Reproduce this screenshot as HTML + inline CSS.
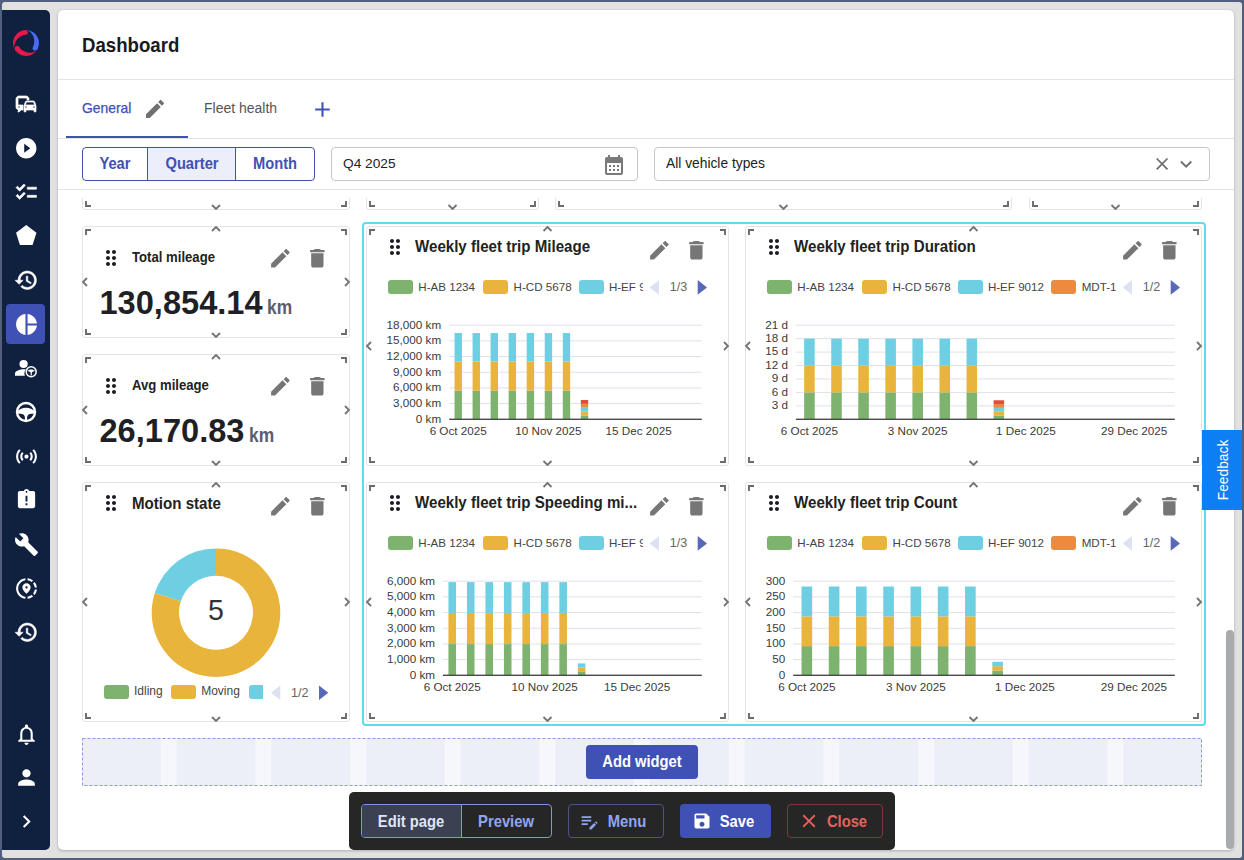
<!DOCTYPE html><html><head><meta charset="utf-8"><style>
*{box-sizing:border-box}
html,body{margin:0;padding:0}
body{width:1244px;height:860px;overflow:hidden;position:relative;background:#525f7d;font-family:"Liberation Sans",sans-serif;color:#222}
.abs{position:absolute}
svg{display:block;overflow:visible}
#frame{position:absolute;left:2px;top:2px;width:1240px;height:856px;background:#e1e1e1;border-radius:3px}
#side{position:absolute;left:2px;top:10px;width:48px;height:840px;background:#10213f;border-radius:0 5px 5px 0}
#main{position:absolute;left:58px;top:10px;width:1176px;height:840px;background:#fff;border-radius:5px;box-shadow:0 1px 3px rgba(0,0,0,.22),0 0 1px rgba(0,0,0,.15)}
.hline{position:absolute;height:1px;background:#e3e3e3}
.t{position:absolute;white-space:nowrap}
</style></head><body>
<div id="frame"></div><div id="side"></div><div id="main"></div>
<svg class="abs" style="left:13px;top:30px" width="26" height="26" viewBox="0 0 26 26"><path fill="#e8194a" d="M1.22 18.25 L0.97 17.66 L0.76 17.07 L0.58 16.47 L0.42 15.86 L0.30 15.24 L0.20 14.62 L0.14 13.99 L0.11 13.36 L0.10 12.73 L0.13 12.10 L0.19 11.47 L0.28 10.85 L0.40 10.23 L0.55 9.62 L0.73 9.01 L0.94 8.42 L1.18 7.84 L1.45 7.26 L1.74 6.71 L2.06 6.16 L2.41 5.64 L2.78 5.13 L3.18 4.64 L3.60 4.17 L4.04 3.72 L4.50 3.29 L4.99 2.89 L5.49 2.51 L6.01 2.16 L6.55 1.83 L7.10 1.53 L7.67 1.25 L8.25 1.01 L8.84 0.79 L9.44 0.60 L10.05 0.44 L10.67 0.31 L11.29 0.21 L11.92 0.15 L12.55 0.11 L12.71 4.71 L12.31 4.73 L11.90 4.77 L11.50 4.84 L11.10 4.92 L10.71 5.02 L10.33 5.14 L9.94 5.28 L9.57 5.44 L9.20 5.61 L8.84 5.79 L8.48 5.98 L8.12 6.18 L7.76 6.39 L7.40 6.61 L7.05 6.84 L6.69 7.08 L6.34 7.33 L5.99 7.60 L5.65 7.89 L5.30 8.19 L4.96 8.51 L4.63 8.85 L4.30 9.20 L3.98 9.57 L3.67 9.97 L3.37 10.38 L3.08 10.82 L2.80 11.27 L2.54 11.75 L2.29 12.25 L2.07 12.77 L1.86 13.31 L1.68 13.87 L1.53 14.45 L1.40 15.05 L1.30 15.66 L1.23 16.29 L1.19 16.93 L1.18 17.58 L1.22 18.25Z"/><circle fill="#e8194a" cx="12.63" cy="2.41" r="2.30"/><path fill="#4b6bf5" d="M14.35 0.17 L14.98 0.25 L15.62 0.37 L16.24 0.51 L16.86 0.69 L17.46 0.90 L18.06 1.13 L18.64 1.40 L19.21 1.70 L19.77 2.02 L20.31 2.37 L20.83 2.75 L21.33 3.15 L21.81 3.57 L22.26 4.02 L22.70 4.49 L23.11 4.99 L23.50 5.50 L23.86 6.03 L24.19 6.58 L24.49 7.14 L24.77 7.72 L25.02 8.31 L25.24 8.92 L25.42 9.53 L25.58 10.15 L25.71 10.78 L25.80 11.42 L25.87 12.06 L25.90 12.70 L25.90 13.34 L25.86 13.98 L25.80 14.62 L25.70 15.25 L25.57 15.88 L25.42 16.50 L25.23 17.11 L25.01 17.72 L24.76 18.31 L24.48 18.89 L24.17 19.45 L19.93 17.00 L20.12 16.65 L20.29 16.29 L20.45 15.93 L20.58 15.55 L20.70 15.17 L20.80 14.79 L20.88 14.40 L20.96 14.01 L21.02 13.61 L21.08 13.21 L21.13 12.81 L21.17 12.40 L21.19 11.99 L21.21 11.57 L21.21 11.14 L21.20 10.71 L21.18 10.27 L21.14 9.83 L21.08 9.38 L21.01 8.92 L20.92 8.46 L20.81 7.99 L20.68 7.51 L20.52 7.04 L20.35 6.56 L20.14 6.08 L19.92 5.60 L19.66 5.12 L19.38 4.64 L19.07 4.17 L18.73 3.70 L18.36 3.25 L17.96 2.80 L17.54 2.37 L17.08 1.95 L16.59 1.55 L16.07 1.17 L15.52 0.81 L14.95 0.48 L14.35 0.17Z"/><circle fill="#4b6bf5" cx="22.05" cy="18.22" r="2.45"/><path fill="#e8194a" d="M23.17 20.94 L22.77 21.42 L22.36 21.88 L21.92 22.32 L21.46 22.74 L20.99 23.13 L20.49 23.50 L19.98 23.85 L19.45 24.17 L18.91 24.47 L18.35 24.74 L17.78 24.98 L17.20 25.20 L16.61 25.38 L16.01 25.54 L15.41 25.67 L14.80 25.77 L14.18 25.85 L13.56 25.89 L12.94 25.90 L12.32 25.88 L11.71 25.84 L11.09 25.76 L10.48 25.65 L9.88 25.52 L9.28 25.35 L8.69 25.16 L8.12 24.94 L7.55 24.69 L6.99 24.42 L6.45 24.12 L5.93 23.79 L5.42 23.44 L4.93 23.06 L4.45 22.66 L4.00 22.24 L3.57 21.80 L3.15 21.33 L2.77 20.85 L2.40 20.35 L2.06 19.84 L6.30 17.19 L6.51 17.50 L6.73 17.81 L6.97 18.10 L7.22 18.39 L7.49 18.66 L7.77 18.92 L8.05 19.17 L8.34 19.41 L8.64 19.65 L8.95 19.88 L9.26 20.11 L9.58 20.33 L9.91 20.55 L10.25 20.77 L10.60 20.97 L10.96 21.17 L11.34 21.37 L11.72 21.55 L12.12 21.73 L12.53 21.90 L12.96 22.05 L13.40 22.20 L13.86 22.33 L14.33 22.44 L14.81 22.54 L15.31 22.61 L15.82 22.67 L16.34 22.71 L16.88 22.72 L17.43 22.71 L17.98 22.67 L18.55 22.61 L19.12 22.51 L19.70 22.39 L20.28 22.23 L20.86 22.04 L21.44 21.82 L22.02 21.56 L22.60 21.27 L23.17 20.94Z"/><circle fill="#e8194a" cx="4.18" cy="18.51" r="2.50"/></svg>
<svg class="abs" style="left:14.00px;top:92.00px" width="24" height="24" viewBox="0 0 24 24"><path fill="#fff" d="M12 4H5C3.34 4 2 5.34 2 7v8c0 1.66 1.34 3 3 3l-1 1v1h1l2-2.03L9 18v-5H4V5.98L13 6v2h2V7c0-1.66-1.34-3-3-3zM5 14c.55 0 1 .45 1 1s-.45 1-1 1-1-.45-1-1 .45-1 1-1zm15.57-4.34c-.14-.4-.52-.66-.97-.66h-7.19c-.46 0-.83.26-.98.66L10 13.77l.01 5.51c0 .38.31.72.69.72h.62c.38 0 .68-.38.68-.76V18h8v1.24c0 .38.31.76.69.76h.61c.38 0 .69-.34.69-.72l.01-1.37v-4.14l-1.43-4.11zm-8.16.34h7.19l1.03 3h-9.25l1.03-3zM12 16c-.55 0-1-.45-1-1s.45-1 1-1 1 .45 1 1-.45 1-1 1zm8 0c-.55 0-1-.45-1-1s.45-1 1-1 1 .45 1 1-.45 1-1 1z" stroke="#fff" stroke-width="0.7" stroke-linejoin="round"/></svg>
<svg class="abs" style="left:13.75px;top:135.75px" width="24.5" height="24.5" viewBox="0 0 24 24"><path fill="#fff" d="M12 2C6.48 2 2 6.48 2 12s4.48 10 10 10 10-4.48 10-10S17.52 2 12 2zm-2 14.5v-9l6 4.5-6 4.5z"/></svg>
<svg class="abs" style="left:13.75px;top:179.55px" width="24.5" height="24.5" viewBox="0 0 24 24"><path fill="#fff" d="M22 7h-9v2h9V7zm0 8h-9v2h9v-2zM5.54 11L2 7.46l1.41-1.41 2.12 2.12 4.24-4.24 1.41 1.41L5.54 11zm0 8L2 15.46l1.41-1.41 2.12 2.12 4.24-4.24 1.41 1.41L5.54 19z" stroke="#fff" stroke-width="0.6" stroke-linejoin="round"/></svg>
<svg class="abs" style="left:13.75px;top:222.75px" width="24.5" height="24.5" viewBox="0 0 24 24"><path fill="#fff" d="M12 2 22 9.5 18.2 21.5H5.8L2 9.5z"/></svg>
<svg class="abs" style="left:13.55px;top:267.95px" width="24.5" height="24.5" viewBox="0 0 24 24"><path fill="#fff" d="M13 3c-4.97 0-9 4.03-9 9H1l3.89 3.89.07.14L9 12H6c0-3.87 3.13-7 7-7s7 3.13 7 7-3.13 7-7 7c-1.93 0-3.68-.79-4.94-2.06l-1.42 1.42C8.27 19.99 10.51 21 13 21c4.97 0 9-4.03 9-9s-4.03-9-9-9zm-1 5v5l4.28 2.54.72-1.21-3.5-2.08V8H12z" stroke="#fff" stroke-width="0.5" stroke-linejoin="round"/></svg>
<div class="abs" style="left:6px;top:304px;width:39px;height:40px;background:#3f51b5;border-radius:4px"></div>
<svg class="abs" style="left:13.50px;top:311.50px" width="25" height="25" viewBox="0 0 24 24"><path fill="#fff" d="M11 2v20c-5.07-.5-9-4.79-9-10s3.93-9.5 9-10zm2.03 0v8.99H22c-.47-4.74-4.24-8.52-8.97-8.99zm0 11.01V22c4.74-.47 8.5-4.25 8.97-8.99h-8.97z"/></svg>
<svg class="abs" style="left:13px;top:356px" width="26" height="26" viewBox="0 0 26 26">
<circle cx="10.6" cy="8" r="4.1" fill="#fff"/>
<path fill="#fff" d="M2 19.8v-2.3c0-2.6 4.9-4.3 8.6-4.3.8 0 1.6.1 2.3.2-.9 1-1.5 2.4-1.5 3.9 0 .9.2 1.7.5 2.5z"/>
<circle cx="18.2" cy="15.7" r="5" fill="none" stroke="#fff" stroke-width="1.5"/>
<path fill="#fff" d="M14.3 15.1c.9-1.1 2.3-1.7 3.9-1.7s3 .6 3.9 1.7l-2.5.6c-.4.3-.7.7-.8 1.2v2.6h-1.2v-2.6c-.1-.5-.4-.9-.8-1.2z"/>
</svg>
<svg class="abs" style="left:14px;top:400px" width="24" height="24" viewBox="0 0 24 24">
<circle cx="12" cy="12" r="9" fill="none" stroke="#fff" stroke-width="2.4"/>
<path fill="#fff" d="M3.6 11.2c1.8-2.2 5-3.4 8.4-3.4s6.6 1.2 8.4 3.4l-.2 2.2-4.6.6c-1.4.5-2.3 1.8-2.5 3.3l-.2 3.9h-1.8l-.2-3.9c-.2-1.5-1.1-2.8-2.5-3.3l-4.6-.6z"/>
</svg>
<svg class="abs" style="left:13.50px;top:443.50px" width="25" height="25" viewBox="0 0 24 24"><path fill="#fff" d="M7.76 16.24C6.67 15.16 6 13.66 6 12s.67-3.16 1.76-4.24l1.42 1.42C8.45 9.9 8 10.9 8 12c0 1.1.45 2.1 1.17 2.83l-1.41 1.41zm8.48 0C17.33 15.16 18 13.66 18 12s-.67-3.16-1.76-4.24l-1.42 1.42C15.55 9.9 16 10.9 16 12c0 1.1-.45 2.1-1.17 2.83l1.41 1.41zM12 10c-1.1 0-2 .9-2 2s.9 2 2 2 2-.9 2-2-.9-2-2-2zm8 2c0 2.21-.9 4.21-2.35 5.65l1.42 1.42C20.88 17.26 22 14.76 22 12s-1.12-5.26-2.93-7.07l-1.42 1.42C19.1 7.79 20 9.79 20 12zM6.35 6.35L4.93 4.93C3.12 6.74 2 9.24 2 12s1.12 5.26 2.93 7.07l1.42-1.42C4.9 16.21 4 14.21 4 12s.9-4.21 2.35-5.65z"/></svg>
<svg class="abs" style="left:14.50px;top:487.50px" width="23" height="23" viewBox="0 0 24 24"><path fill="#fff" d="M19 3h-4.18C14.4 1.84 13.3 1 12 1c-1.3 0-2.4.84-2.82 2H5c-1.1 0-2 .9-2 2v14c0 1.1.9 2 2 2h14c1.1 0 2-.9 2-2V5c0-1.1-.9-2-2-2zm-6 15h-2v-2h2v2zm0-4h-2V8h2v6zm-1-9c-.55 0-1-.45-1-1s.45-1 1-1 1 .45 1 1-.45 1-1 1z"/></svg>
<svg class="abs" style="left:13.50px;top:532.00px" width="25" height="25" viewBox="0 0 24 24"><path fill="#fff" d="M22.7 19l-9.1-9.1c.9-2.3.4-5-1.5-6.9-2-2-5-2.4-7.4-1.3L9 6 6 9 1.6 4.7C.4 7.1.9 10.1 2.9 12.1c1.9 1.9 4.6 2.4 6.9 1.5l9.1 9.1c.4.4 1 .4 1.4 0l2.3-2.3c.5-.4.5-1.1.1-1.4z"/></svg>
<svg class="abs" style="left:13.50px;top:575.50px" width="25" height="25" viewBox="0 0 24 24"><path fill="#fff" d="M13.02 19.93v2.02c2.01-.2 3.84-1 5.32-2.21l-1.42-1.43c-1.11.86-2.44 1.44-3.9 1.62zM4.03 12c0-4.05 3.03-7.41 6.95-7.93V2.05C5.95 2.58 2.03 6.84 2.03 12c0 5.16 3.92 9.42 8.95 9.95v-2.02c-3.92-.52-6.95-3.88-6.95-7.93zm15.92-1h2.02c-.2-2.01-1-3.84-2.21-5.32l-1.43 1.43c.86 1.1 1.44 2.43 1.620 3.89zm-1.61-6.74c-1.48-1.21-3.32-2.01-5.32-2.21v2.02c1.46.18 2.79.76 3.9 1.62l1.42-1.43zm-.01 12.64 1.43 1.42c1.21-1.48 2.01-3.31 2.21-5.32h-2.02c-.18 1.46-.76 2.79-1.62 3.9zM16 11.1C16 8.610 14.1 7 12 7s-4 1.61-4 4.1c0 1.66 1.33 3.63 4 5.9 2.67-2.27 4-4.240 4-5.9zm-4 .9c-.59 0-1.07-.48-1.07-1.07 0-.59.48-1.070 1.07-1.07s1.07.48 1.07 1.07c0 .59-.48 1.07-1.07 1.07z"/></svg>
<svg class="abs" style="left:13.55px;top:620.45px" width="24.5" height="24.5" viewBox="0 0 24 24"><path fill="#fff" d="M13 3c-4.97 0-9 4.03-9 9H1l3.89 3.89.07.14L9 12H6c0-3.87 3.13-7 7-7s7 3.13 7 7-3.13 7-7 7c-1.93 0-3.68-.79-4.94-2.06l-1.42 1.42C8.27 19.99 10.51 21 13 21c4.97 0 9-4.03 9-9s-4.03-9-9-9zm-1 5v5l4.28 2.54.72-1.21-3.5-2.08V8H12z" stroke="#fff" stroke-width="0.5" stroke-linejoin="round"/></svg>
<svg class="abs" style="left:13.50px;top:721.50px" width="25" height="25" viewBox="0 0 24 24"><path fill="#fff" d="M12 22c1.1 0 2-.9 2-2h-4c0 1.1.89 2 2 2zm6-6v-5c0-3.07-1.64-5.64-4.5-6.32V4c0-.83-.67-1.5-1.5-1.5s-1.5.67-1.5 1.5v.68C7.63 5.36 6 7.92 6 11v5l-2 2v1h16v-1l-2-2zm-2 1H8v-6c0-2.48 1.51-4.5 4-4.5s4 2.02 4 4.5v6z"/></svg>
<svg class="abs" style="left:13.50px;top:765.00px" width="25" height="25" viewBox="0 0 24 24"><path fill="#fff" d="M12 12c2.21 0 4-1.79 4-4s-1.790-4-4-4-4 1.79-4 4 1.79 4 4 4zm0 2c-2.67 0-8 1.34-8 4v2h16v-2c0-2.66-5.33-4-8-4z"/></svg>
<svg class="abs" style="left:13.50px;top:808.50px" width="25" height="25" viewBox="0 0 24 24"><path fill="#fff" d="M10 6 8.59 7.41 13.17 12l-4.58 4.59L10 18l6-6z"/></svg>
<div class="t" style="left:82px;top:32px;font-size:20.6px;font-weight:700;color:#1a1a1a;line-height:26px;transform:scaleX(0.905);transform-origin:0 0">Dashboard</div>
<div class="hline" style="left:58px;top:79px;width:1176px"></div>
<div class="t" style="left:82px;top:98.9px;font-size:13.9px;color:#3f51b5;line-height:18px;-webkit-text-stroke:0.25px #3f51b5">General</div>
<svg class="abs" style="left:143.30px;top:96.80px" width="24" height="24" viewBox="0 0 24 24"><path fill="#707070" d="M3 17.25V21h3.75L17.81 9.94l-3.75-3.75L3 17.25zM20.71 7.04c.39-.39.39-1.02 0-1.41l-2.34-2.34c-.39-.39-1.02-.39-1.41 0l-1.83 1.83 3.75 3.75 1.83-1.83z"/></svg>
<svg class="abs" style="left:309.80px;top:96.50px" width="25" height="25" viewBox="0 0 24 24"><path fill="#3f51b5" d="M19 13h-6v6h-2v-6H5v-2h6V5h2v6h6v2z"/></svg>
<div class="abs" style="left:82px;top:147px;width:233px;height:34px;border:1px solid #3f51b5;border-radius:4px;overflow:hidden"><div class="abs" style="left:64px;top:0;width:89px;height:32px;background:#eceef9;border-left:1px solid #3f51b5;border-right:1px solid #3f51b5"></div></div>
<div class="t" style="left:54.8px;width:120px;text-align:center;top:153.5px;font-size:16.6px;line-height:20px;color:#3f51b5;font-weight:700;transform:scaleX(0.885)">Year</div>
<div class="t" style="left:131.5px;width:120px;text-align:center;top:153.5px;font-size:16.6px;line-height:20px;color:#3f51b5;font-weight:700;transform:scaleX(0.885)">Quarter</div>
<div class="t" style="left:214.8px;width:120px;text-align:center;top:153.5px;font-size:16.6px;line-height:20px;color:#3f51b5;font-weight:700;transform:scaleX(0.885)">Month</div>
<div class="abs" style="left:331px;top:147px;width:307px;height:34px;border:1px solid #c6c6c6;border-radius:4px"></div>
<div class="t" style="left:343px;top:155px;font-size:13.7px;line-height:17px;color:#222">Q4 2025</div>
<svg class="abs" style="left:601.60px;top:152.60px" width="24" height="24" viewBox="0 0 24 24"><path fill="#7a7a7a" d="M19 4h-1V2h-2v2H8V2H6v2H5c-1.11 0-1.99.9-1.99 2L3 20c0 1.1.89 2 2 2h14c1.1 0 2-.9 2-2V6c0-1.1-.9-2-2-2zm0 16H5V10h14v10zM9 14H7v-2h2v2zm4 0h-2v-2h2v2zm4 0h-2v-2h2v2zm-8 4H7v-2h2v2zm4 0h-2v-2h2v2zm4 0h-2v-2h2v2z"/></svg>
<div class="abs" style="left:654px;top:147px;width:556px;height:34px;border:1px solid #c6c6c6;border-radius:4px"></div>
<div class="t" style="left:666px;top:155px;font-size:13.8px;line-height:17px;color:#222">All vehicle types</div>
<svg class="abs" style="left:0;top:0" width="1244" height="860"><path d="M1156.7 158.5L1167.5 169.3M1167.5 158.5L1156.7 169.3" stroke="#6e6e6e" stroke-width="1.75" fill="none"/><path d="M1180.9 161.5L1186.1 166.7L1191.3 161.5" stroke="#6e6e6e" stroke-width="1.9" fill="none"/></svg>
<div class="t" style="left:204px;top:99px;font-size:14px;color:#555;line-height:18px">Fleet health</div>
<div class="abs" style="left:66px;top:136px;width:122px;height:2px;background:#3f51b5"></div>
<div class="hline" style="left:58px;top:138px;width:1176px"></div>
<div class="hline" style="left:58px;top:189px;width:1176px"></div>
<div class="abs" style="left:58px;top:198px;width:1168px;height:652px;overflow:hidden"><div class="abs" style="left:-58px;top:-198px;width:1244px;height:860px">
<div class="abs" style="left:82px;top:98px;width:268px;height:112px;border:1px solid #e3e3e6;border-radius:3px;background:#fff"></div><svg class="abs" style="left:0;top:0" width="1244" height="860"><path d="M86 107V102H91 M341 102H346V107 M86 201V206H91 M341 206H346V201" fill="none" stroke="#6b6b6b" stroke-width="1.9" stroke-linecap="butt"/><path d="M212.0 103L216.0 99L220.0 103 M212.0 205L216.0 209L220.0 205 M87 150.0L83 154.0L87 158.0 M345 150.0L349 154.0L345 158.0" fill="none" stroke="#737373" stroke-width="1.8"/></svg>
<div class="abs" style="left:366px;top:98px;width:173px;height:112px;border:1px solid #e3e3e6;border-radius:3px;background:#fff"></div><svg class="abs" style="left:0;top:0" width="1244" height="860"><path d="M370 107V102H375 M530 102H535V107 M370 201V206H375 M530 206H535V201" fill="none" stroke="#6b6b6b" stroke-width="1.9" stroke-linecap="butt"/><path d="M448.5 103L452.5 99L456.5 103 M448.5 205L452.5 209L456.5 205 M371 150.0L367 154.0L371 158.0 M534 150.0L538 154.0L534 158.0" fill="none" stroke="#737373" stroke-width="1.8"/></svg>
<div class="abs" style="left:555px;top:98px;width:457px;height:112px;border:1px solid #e3e3e6;border-radius:3px;background:#fff"></div><svg class="abs" style="left:0;top:0" width="1244" height="860"><path d="M559 107V102H564 M1003 102H1008V107 M559 201V206H564 M1003 206H1008V201" fill="none" stroke="#6b6b6b" stroke-width="1.9" stroke-linecap="butt"/><path d="M779.5 103L783.5 99L787.5 103 M779.5 205L783.5 209L787.5 205 M560 150.0L556 154.0L560 158.0 M1007 150.0L1011 154.0L1007 158.0" fill="none" stroke="#737373" stroke-width="1.8"/></svg>
<div class="abs" style="left:1029px;top:98px;width:173px;height:112px;border:1px solid #e3e3e6;border-radius:3px;background:#fff"></div><svg class="abs" style="left:0;top:0" width="1244" height="860"><path d="M1033 107V102H1038 M1193 102H1198V107 M1033 201V206H1038 M1193 206H1198V201" fill="none" stroke="#6b6b6b" stroke-width="1.9" stroke-linecap="butt"/><path d="M1111.5 103L1115.5 99L1119.5 103 M1111.5 205L1115.5 209L1119.5 205 M1034 150.0L1030 154.0L1034 158.0 M1197 150.0L1201 154.0L1197 158.0" fill="none" stroke="#737373" stroke-width="1.8"/></svg>
</div></div>
<div class="abs" style="left:362px;top:222px;width:844px;height:504px;border:2px solid #5edbec;border-radius:4px"></div>
<div class="abs" style="left:82px;top:226px;width:268px;height:112px;border:1px solid #e3e3e6;border-radius:3px;background:#fff"></div><svg class="abs" style="left:0;top:0" width="1244" height="860"><path d="M86 235V230H91 M341 230H346V235 M86 329V334H91 M341 334H346V329" fill="none" stroke="#6b6b6b" stroke-width="1.9" stroke-linecap="butt"/><path d="M212.0 231L216.0 227L220.0 231 M212.0 333L216.0 337L220.0 333 M87 278.0L83 282.0L87 286.0 M345 278.0L349 282.0L345 286.0" fill="none" stroke="#737373" stroke-width="1.8"/></svg>
<svg class="abs" style="left:99.20px;top:246.00px" width="24" height="24" viewBox="0 0 24 24"><path fill="#1c1c24" d="M11 18c0 1.1-.9 2-2 2s-2-.9-2-2 .9-2 2-2 2 .9 2 2zm-2-8c-1.1 0-2 .9-2 2s.9 2 2 2 2-.9 2-2-.9-2-2-2zm0-6c-1.1 0-2 .9-2 2s.9 2 2 2 2-.9 2-2-.9-2-2-2zm6 4c1.1 0 2-.9 2-2s-.9-2-2-2-2 .9-2 2 .9 2 2 2zm0 2c-1.1 0-2 .9-2 2s.9 2 2 2 2-.9 2-2-.9-2-2-2zm0 6c-1.1 0-2 .9-2 2s.9 2 2 2 2-.9 2-2-.9-2-2-2z"/></svg>
<div class="t" style="left:131.80px;top:248.47px;font-size:14.6px;line-height:18px;color:#222;font-weight:700;transform:scaleX(0.9);transform-origin:0 0;">Total mileage</div>
<svg class="abs" style="left:267.65px;top:245.65px" width="24.7" height="24.7" viewBox="0 0 24 24"><path fill="#767676" d="M3 17.25V21h3.75L17.81 9.94l-3.75-3.75L3 17.25zM20.71 7.04c.39-.39.39-1.02 0-1.41l-2.34-2.34c-.39-.39-1.02-.39-1.41 0l-1.83 1.83 3.75 3.75 1.83-1.83z"/></svg><svg class="abs" style="left:305.45px;top:245.65px" width="24.7" height="24.7" viewBox="0 0 24 24"><path fill="#767676" d="M6 19c0 1.1.9 2 2 2h8c1.1 0 2-.9 2-2V7H6v12zM19 4h-3.5l-1-1h-5l-1 1H5v2h14V4z"/></svg>
<div class="t" style="left:99.50px;top:282.23px;font-size:32.6px;line-height:41px;color:#1f1f26;font-weight:700;">130,854.14</div>
<div class="t" style="left:267.00px;top:294.69px;font-size:20px;line-height:25px;color:#5a5d70;font-weight:700;transform:scaleX(0.87);transform-origin:0 0">km</div>
<div class="abs" style="left:82px;top:354px;width:268px;height:112px;border:1px solid #e3e3e6;border-radius:3px;background:#fff"></div><svg class="abs" style="left:0;top:0" width="1244" height="860"><path d="M86 363V358H91 M341 358H346V363 M86 457V462H91 M341 462H346V457" fill="none" stroke="#6b6b6b" stroke-width="1.9" stroke-linecap="butt"/><path d="M212.0 359L216.0 355L220.0 359 M212.0 461L216.0 465L220.0 461 M87 406.0L83 410.0L87 414.0 M345 406.0L349 410.0L345 414.0" fill="none" stroke="#737373" stroke-width="1.8"/></svg>
<svg class="abs" style="left:99.20px;top:374.00px" width="24" height="24" viewBox="0 0 24 24"><path fill="#1c1c24" d="M11 18c0 1.1-.9 2-2 2s-2-.9-2-2 .9-2 2-2 2 .9 2 2zm-2-8c-1.1 0-2 .9-2 2s.9 2 2 2 2-.9 2-2-.9-2-2-2zm0-6c-1.1 0-2 .9-2 2s.9 2 2 2 2-.9 2-2-.9-2-2-2zm6 4c1.1 0 2-.9 2-2s-.9-2-2-2-2 .9-2 2 .9 2 2 2zm0 2c-1.1 0-2 .9-2 2s.9 2 2 2 2-.9 2-2-.9-2-2-2zm0 6c-1.1 0-2 .9-2 2s.9 2 2 2 2-.9 2-2-.9-2-2-2z"/></svg>
<div class="t" style="left:131.80px;top:376.47px;font-size:14.6px;line-height:18px;color:#222;font-weight:700;transform:scaleX(0.9);transform-origin:0 0;">Avg mileage</div>
<svg class="abs" style="left:267.65px;top:373.65px" width="24.7" height="24.7" viewBox="0 0 24 24"><path fill="#767676" d="M3 17.25V21h3.75L17.81 9.94l-3.75-3.75L3 17.25zM20.71 7.04c.39-.39.39-1.02 0-1.41l-2.34-2.34c-.39-.39-1.02-.39-1.41 0l-1.83 1.83 3.75 3.75 1.83-1.83z"/></svg><svg class="abs" style="left:305.45px;top:373.65px" width="24.7" height="24.7" viewBox="0 0 24 24"><path fill="#767676" d="M6 19c0 1.1.9 2 2 2h8c1.1 0 2-.9 2-2V7H6v12zM19 4h-3.5l-1-1h-5l-1 1H5v2h14V4z"/></svg>
<div class="t" style="left:99.50px;top:410.23px;font-size:32.6px;line-height:41px;color:#1f1f26;font-weight:700;">26,170.83</div>
<div class="t" style="left:248.50px;top:422.69px;font-size:20px;line-height:25px;color:#5a5d70;font-weight:700;transform:scaleX(0.87);transform-origin:0 0">km</div>
<div class="abs" style="left:82px;top:482px;width:268px;height:240px;border:1px solid #e3e3e6;border-radius:3px;background:#fff"></div><svg class="abs" style="left:0;top:0" width="1244" height="860"><path d="M86 491V486H91 M341 486H346V491 M86 713V718H91 M341 718H346V713" fill="none" stroke="#6b6b6b" stroke-width="1.9" stroke-linecap="butt"/><path d="M212.0 487L216.0 483L220.0 487 M212.0 717L216.0 721L220.0 717 M87 598.0L83 602.0L87 606.0 M345 598.0L349 602.0L345 606.0" fill="none" stroke="#737373" stroke-width="1.8"/></svg>
<svg class="abs" style="left:99.20px;top:491.00px" width="24" height="24" viewBox="0 0 24 24"><path fill="#1c1c24" d="M11 18c0 1.1-.9 2-2 2s-2-.9-2-2 .9-2 2-2 2 .9 2 2zm-2-8c-1.1 0-2 .9-2 2s.9 2 2 2 2-.9 2-2-.9-2-2-2zm0-6c-1.1 0-2 .9-2 2s.9 2 2 2 2-.9 2-2-.9-2-2-2zm6 4c1.1 0 2-.9 2-2s-.9-2-2-2-2 .9-2 2 .9 2 2 2zm0 2c-1.1 0-2 .9-2 2s.9 2 2 2 2-.9 2-2-.9-2-2-2zm0 6c-1.1 0-2 .9-2 2s.9 2 2 2 2-.9 2-2-.9-2-2-2z"/></svg>
<div class="t" style="left:132.00px;top:493.21px;font-size:16.6px;line-height:21px;color:#222;font-weight:700;transform:scaleX(0.91);transform-origin:0 0;">Motion state</div>
<svg class="abs" style="left:267.65px;top:493.65px" width="24.7" height="24.7" viewBox="0 0 24 24"><path fill="#767676" d="M3 17.25V21h3.75L17.81 9.94l-3.75-3.75L3 17.25zM20.71 7.04c.39-.39.39-1.02 0-1.41l-2.34-2.34c-.39-.39-1.02-.39-1.41 0l-1.83 1.83 3.75 3.75 1.83-1.83z"/></svg><svg class="abs" style="left:305.45px;top:493.65px" width="24.7" height="24.7" viewBox="0 0 24 24"><path fill="#767676" d="M6 19c0 1.1.9 2 2 2h8c1.1 0 2-.9 2-2V7H6v12zM19 4h-3.5l-1-1h-5l-1 1H5v2h14V4z"/></svg>
<svg class="abs" style="left:0;top:0" width="1244" height="860"><path fill="#e9b43b" d="M216.00 548.40A64.3 64.3 0 1 1 154.85 592.83L180.81 601.27A37 37 0 1 0 216.00 575.70Z"/><path fill="#6dcfe1" d="M154.85 592.83A64.3 64.3 0 0 1 216.00 548.40L216.00 575.70A37 37 0 0 0 180.81 601.27Z"/></svg>
<div class="t" style="left:16.30px;width:400px;text-align:center;top:591.09px;font-size:30px;line-height:38px;color:#333;font-weight:400;transform:scaleX(0.95);transform-origin:50% 0;">5</div>
<div class="abs" style="left:104px;top:685.3px;width:25px;height:14px;background:#7db26f;border-radius:3px"></div>
<div class="t" style="left:134.00px;top:684.33px;font-size:12px;line-height:15px;color:#444;font-weight:400;">Idling</div>
<div class="abs" style="left:171.3px;top:685.3px;width:25px;height:14px;background:#e9b43b;border-radius:3px"></div>
<div class="t" style="left:201.20px;top:684.33px;font-size:12px;line-height:15px;color:#444;font-weight:400;">Moving</div>
<div class="abs" style="left:249px;top:685px;width:14px;height:14px;overflow:hidden"><div class="abs" style="left:0;top:0;width:25px;height:14px;background:#6dcfe1;border-radius:3px"></div></div>
<svg class="abs" style="left:0;top:0" width="1244" height="860"><path fill="#dde1f2" d="M280.3 685.4L271 692.6999999999999L280.3 699.9999999999999Z"/><path fill="#5869b9" d="M319 685.4L328.3 692.6999999999999L319 699.9999999999999Z"/></svg><div class="t" style="left:291.00px;top:684.74px;font-size:12.6px;line-height:16px;color:#666;font-weight:400;">1/2</div>
<div class="abs" style="left:366px;top:226px;width:363px;height:240px;border:1px solid #e3e3e6;border-radius:3px;background:#fff"></div><svg class="abs" style="left:0;top:0" width="1244" height="860"><path d="M370 235V230H375 M720 230H725V235 M370 457V462H375 M720 462H725V457" fill="none" stroke="#6b6b6b" stroke-width="1.9" stroke-linecap="butt"/><path d="M543.5 231L547.5 227L551.5 231 M543.5 461L547.5 465L551.5 461 M371 342.0L367 346.0L371 350.0 M724 342.0L728 346.0L724 350.0" fill="none" stroke="#737373" stroke-width="1.8"/></svg><svg class="abs" style="left:383.00px;top:235.00px" width="24" height="24" viewBox="0 0 24 24"><path fill="#1c1c24" d="M11 18c0 1.1-.9 2-2 2s-2-.9-2-2 .9-2 2-2 2 .9 2 2zm-2-8c-1.1 0-2 .9-2 2s.9 2 2 2 2-.9 2-2-.9-2-2-2zm0-6c-1.1 0-2 .9-2 2s.9 2 2 2 2-.9 2-2-.9-2-2-2zm6 4c1.1 0 2-.9 2-2s-.9-2-2-2-2 .9-2 2 .9 2 2 2zm0 2c-1.1 0-2 .9-2 2s.9 2 2 2 2-.9 2-2-.9-2-2-2zm0 6c-1.1 0-2 .9-2 2s.9 2 2 2 2-.9 2-2-.9-2-2-2z"/></svg><div class="t" style="left:415.20px;top:235.81px;font-size:16.6px;line-height:21px;color:#222;font-weight:700;transform:scaleX(0.91);transform-origin:0 0;">Weekly fleet trip Mileage</div><svg class="abs" style="left:646.65px;top:238.15px" width="24.7" height="24.7" viewBox="0 0 24 24"><path fill="#767676" d="M3 17.25V21h3.75L17.81 9.94l-3.75-3.75L3 17.25zM20.71 7.04c.39-.39.39-1.02 0-1.41l-2.34-2.34c-.39-.39-1.02-.39-1.41 0l-1.83 1.83 3.75 3.75 1.83-1.83z"/></svg><svg class="abs" style="left:684.45px;top:238.15px" width="24.7" height="24.7" viewBox="0 0 24 24"><path fill="#767676" d="M6 19c0 1.1.9 2 2 2h8c1.1 0 2-.9 2-2V7H6v12zM19 4h-3.5l-1-1h-5l-1 1H5v2h14V4z"/></svg><div class="abs" style="left:0;top:0;width:643.0px;height:860px;overflow:hidden"><div class="abs" style="left:388px;top:280px;width:25px;height:14px;background:#7db26f;border-radius:3px"></div><div class="t" style="left:418.30px;top:280.37px;font-size:11.6px;line-height:14px;color:#444;font-weight:400;">H-AB 1234</div><div class="abs" style="left:483.3px;top:280px;width:25px;height:14px;background:#e9b43b;border-radius:3px"></div><div class="t" style="left:513.60px;top:280.37px;font-size:11.6px;line-height:14px;color:#444;font-weight:400;">H-CD 5678</div><div class="abs" style="left:578.6px;top:280px;width:25px;height:14px;background:#6dcfe1;border-radius:3px"></div><div class="t" style="left:608.90px;top:280.37px;font-size:11.6px;line-height:14px;color:#444;font-weight:400;">H-EF 9012</div></div><svg class="abs" style="left:0;top:0" width="1244" height="860"><path fill="#dde1f2" d="M659.0 280.09999999999997L649.7 287.4L659.0 294.7Z"/><path fill="#5869b9" d="M697.7 280.09999999999997L707.0 287.4L697.7 294.7Z"/></svg><div class="t" style="left:669.70px;top:279.44px;font-size:12.6px;line-height:16px;color:#666;font-weight:400;">1/3</div><svg class="abs" style="left:0;top:0" width="1244" height="860"><text x="441.2" y="422.70" text-anchor="end" font-size="11.7" fill="#3a3a3a">0 km</text><rect x="449.2" y="403.12" width="252.60" height="1" fill="#dfe1ea"/><text x="441.2" y="407.02" text-anchor="end" font-size="11.7" fill="#3a3a3a">3,000 km</text><rect x="449.2" y="387.43" width="252.60" height="1" fill="#dfe1ea"/><text x="441.2" y="391.33" text-anchor="end" font-size="11.7" fill="#3a3a3a">6,000 km</text><rect x="449.2" y="371.75" width="252.60" height="1" fill="#dfe1ea"/><text x="441.2" y="375.65" text-anchor="end" font-size="11.7" fill="#3a3a3a">9,000 km</text><rect x="449.2" y="356.07" width="252.60" height="1" fill="#dfe1ea"/><text x="441.2" y="359.97" text-anchor="end" font-size="11.7" fill="#3a3a3a">12,000 km</text><rect x="449.2" y="340.38" width="252.60" height="1" fill="#dfe1ea"/><text x="441.2" y="344.28" text-anchor="end" font-size="11.7" fill="#3a3a3a">15,000 km</text><rect x="449.2" y="324.70" width="252.60" height="1" fill="#dfe1ea"/><text x="441.2" y="328.60" text-anchor="end" font-size="11.7" fill="#3a3a3a">18,000 km</text><rect x="454.52" y="390.55" width="7.40" height="28.75" fill="#7db26f"/><rect x="454.52" y="361.48" width="7.40" height="29.07" fill="#e9b43b"/><rect x="454.52" y="333.04" width="7.40" height="28.44" fill="#6dcfe1"/><rect x="472.57" y="390.55" width="7.40" height="28.75" fill="#7db26f"/><rect x="472.57" y="361.48" width="7.40" height="29.07" fill="#e9b43b"/><rect x="472.57" y="333.04" width="7.40" height="28.44" fill="#6dcfe1"/><rect x="490.61" y="390.55" width="7.40" height="28.75" fill="#7db26f"/><rect x="490.61" y="361.48" width="7.40" height="29.07" fill="#e9b43b"/><rect x="490.61" y="333.04" width="7.40" height="28.44" fill="#6dcfe1"/><rect x="508.65" y="390.55" width="7.40" height="28.75" fill="#7db26f"/><rect x="508.65" y="361.48" width="7.40" height="29.07" fill="#e9b43b"/><rect x="508.65" y="333.04" width="7.40" height="28.44" fill="#6dcfe1"/><rect x="526.69" y="390.55" width="7.40" height="28.75" fill="#7db26f"/><rect x="526.69" y="361.48" width="7.40" height="29.07" fill="#e9b43b"/><rect x="526.69" y="333.04" width="7.40" height="28.44" fill="#6dcfe1"/><rect x="544.74" y="390.55" width="7.40" height="28.75" fill="#7db26f"/><rect x="544.74" y="361.48" width="7.40" height="29.07" fill="#e9b43b"/><rect x="544.74" y="333.04" width="7.40" height="28.44" fill="#6dcfe1"/><rect x="562.78" y="390.55" width="7.40" height="28.75" fill="#7db26f"/><rect x="562.78" y="361.48" width="7.40" height="29.07" fill="#e9b43b"/><rect x="562.78" y="333.04" width="7.40" height="28.44" fill="#6dcfe1"/><rect x="580.82" y="415.43" width="7.40" height="3.87" fill="#7db26f"/><rect x="580.82" y="411.56" width="7.40" height="3.87" fill="#e9b43b"/><rect x="580.82" y="407.69" width="7.40" height="3.87" fill="#6dcfe1"/><rect x="580.82" y="403.83" width="7.40" height="3.87" fill="#ef8a3d"/><rect x="580.82" y="399.96" width="7.40" height="3.87" fill="#e34b3f"/><rect x="449.2" y="418.60" width="252.60" height="1.4" fill="#4a4a4a"/><text x="458.22" y="435.40" text-anchor="middle" font-size="11.7" fill="#3a3a3a">6 Oct 2025</text><text x="548.44" y="435.40" text-anchor="middle" font-size="11.7" fill="#3a3a3a">10 Nov 2025</text><text x="638.65" y="435.40" text-anchor="middle" font-size="11.7" fill="#3a3a3a">15 Dec 2025</text></svg>
<div class="abs" style="left:745px;top:226px;width:457px;height:240px;border:1px solid #e3e3e6;border-radius:3px;background:#fff"></div><svg class="abs" style="left:0;top:0" width="1244" height="860"><path d="M749 235V230H754 M1193 230H1198V235 M749 457V462H754 M1193 462H1198V457" fill="none" stroke="#6b6b6b" stroke-width="1.9" stroke-linecap="butt"/><path d="M969.5 231L973.5 227L977.5 231 M969.5 461L973.5 465L977.5 461 M750 342.0L746 346.0L750 350.0 M1197 342.0L1201 346.0L1197 350.0" fill="none" stroke="#737373" stroke-width="1.8"/></svg><svg class="abs" style="left:762.00px;top:235.00px" width="24" height="24" viewBox="0 0 24 24"><path fill="#1c1c24" d="M11 18c0 1.1-.9 2-2 2s-2-.9-2-2 .9-2 2-2 2 .9 2 2zm-2-8c-1.1 0-2 .9-2 2s.9 2 2 2 2-.9 2-2-.9-2-2-2zm0-6c-1.1 0-2 .9-2 2s.9 2 2 2 2-.9 2-2-.9-2-2-2zm6 4c1.1 0 2-.9 2-2s-.9-2-2-2-2 .9-2 2 .9 2 2 2zm0 2c-1.1 0-2 .9-2 2s.9 2 2 2 2-.9 2-2-.9-2-2-2zm0 6c-1.1 0-2 .9-2 2s.9 2 2 2 2-.9 2-2-.9-2-2-2z"/></svg><div class="t" style="left:794.20px;top:235.81px;font-size:16.6px;line-height:21px;color:#222;font-weight:700;transform:scaleX(0.91);transform-origin:0 0;">Weekly fleet trip Duration</div><svg class="abs" style="left:1119.65px;top:238.15px" width="24.7" height="24.7" viewBox="0 0 24 24"><path fill="#767676" d="M3 17.25V21h3.75L17.81 9.94l-3.75-3.75L3 17.25zM20.71 7.04c.39-.39.39-1.02 0-1.41l-2.34-2.34c-.39-.39-1.02-.39-1.41 0l-1.83 1.83 3.75 3.75 1.83-1.83z"/></svg><svg class="abs" style="left:1157.45px;top:238.15px" width="24.7" height="24.7" viewBox="0 0 24 24"><path fill="#767676" d="M6 19c0 1.1.9 2 2 2h8c1.1 0 2-.9 2-2V7H6v12zM19 4h-3.5l-1-1h-5l-1 1H5v2h14V4z"/></svg><div class="abs" style="left:0;top:0;width:1116.0px;height:860px;overflow:hidden"><div class="abs" style="left:767px;top:280px;width:25px;height:14px;background:#7db26f;border-radius:3px"></div><div class="t" style="left:797.30px;top:280.37px;font-size:11.6px;line-height:14px;color:#444;font-weight:400;">H-AB 1234</div><div class="abs" style="left:862.3px;top:280px;width:25px;height:14px;background:#e9b43b;border-radius:3px"></div><div class="t" style="left:892.60px;top:280.37px;font-size:11.6px;line-height:14px;color:#444;font-weight:400;">H-CD 5678</div><div class="abs" style="left:957.6px;top:280px;width:25px;height:14px;background:#6dcfe1;border-radius:3px"></div><div class="t" style="left:987.90px;top:280.37px;font-size:11.6px;line-height:14px;color:#444;font-weight:400;">H-EF 9012</div><div class="abs" style="left:1051.4px;top:280px;width:25px;height:14px;background:#ef8a3d;border-radius:3px"></div><div class="t" style="left:1081.70px;top:280.37px;font-size:11.6px;line-height:14px;color:#444;font-weight:400;">MDT-1234</div></div><svg class="abs" style="left:0;top:0" width="1244" height="860"><path fill="#dde1f2" d="M1132.0 280.09999999999997L1122.7 287.4L1132.0 294.7Z"/><path fill="#5869b9" d="M1170.7 280.09999999999997L1180.0 287.4L1170.7 294.7Z"/></svg><div class="t" style="left:1142.70px;top:279.44px;font-size:12.6px;line-height:16px;color:#666;font-weight:400;">1/2</div><svg class="abs" style="left:0;top:0" width="1244" height="860"><rect x="795.9" y="405.36" width="378.90" height="1" fill="#dfe1ea"/><text x="787.9" y="409.26" text-anchor="end" font-size="11.7" fill="#3a3a3a">3 d</text><rect x="795.9" y="391.91" width="378.90" height="1" fill="#dfe1ea"/><text x="787.9" y="395.81" text-anchor="end" font-size="11.7" fill="#3a3a3a">6 d</text><rect x="795.9" y="378.47" width="378.90" height="1" fill="#dfe1ea"/><text x="787.9" y="382.37" text-anchor="end" font-size="11.7" fill="#3a3a3a">9 d</text><rect x="795.9" y="365.03" width="378.90" height="1" fill="#dfe1ea"/><text x="787.9" y="368.93" text-anchor="end" font-size="11.7" fill="#3a3a3a">12 d</text><rect x="795.9" y="351.59" width="378.90" height="1" fill="#dfe1ea"/><text x="787.9" y="355.49" text-anchor="end" font-size="11.7" fill="#3a3a3a">15 d</text><rect x="795.9" y="338.14" width="378.90" height="1" fill="#dfe1ea"/><text x="787.9" y="342.04" text-anchor="end" font-size="11.7" fill="#3a3a3a">18 d</text><rect x="795.9" y="324.70" width="378.90" height="1" fill="#dfe1ea"/><text x="787.9" y="328.60" text-anchor="end" font-size="11.7" fill="#3a3a3a">21 d</text><rect x="804.15" y="392.41" width="10.56" height="26.89" fill="#7db26f"/><rect x="804.15" y="365.53" width="10.56" height="26.89" fill="#e9b43b"/><rect x="804.15" y="338.64" width="10.56" height="26.89" fill="#6dcfe1"/><rect x="831.22" y="392.41" width="10.56" height="26.89" fill="#7db26f"/><rect x="831.22" y="365.53" width="10.56" height="26.89" fill="#e9b43b"/><rect x="831.22" y="338.64" width="10.56" height="26.89" fill="#6dcfe1"/><rect x="858.28" y="392.41" width="10.56" height="26.89" fill="#7db26f"/><rect x="858.28" y="365.53" width="10.56" height="26.89" fill="#e9b43b"/><rect x="858.28" y="338.64" width="10.56" height="26.89" fill="#6dcfe1"/><rect x="885.35" y="392.41" width="10.56" height="26.89" fill="#7db26f"/><rect x="885.35" y="365.53" width="10.56" height="26.89" fill="#e9b43b"/><rect x="885.35" y="338.64" width="10.56" height="26.89" fill="#6dcfe1"/><rect x="912.41" y="392.41" width="10.56" height="26.89" fill="#7db26f"/><rect x="912.41" y="365.53" width="10.56" height="26.89" fill="#e9b43b"/><rect x="912.41" y="338.64" width="10.56" height="26.89" fill="#6dcfe1"/><rect x="939.48" y="392.41" width="10.56" height="26.89" fill="#7db26f"/><rect x="939.48" y="365.53" width="10.56" height="26.89" fill="#e9b43b"/><rect x="939.48" y="338.64" width="10.56" height="26.89" fill="#6dcfe1"/><rect x="966.54" y="392.41" width="10.56" height="26.89" fill="#7db26f"/><rect x="966.54" y="365.53" width="10.56" height="26.89" fill="#e9b43b"/><rect x="966.54" y="338.64" width="10.56" height="26.89" fill="#6dcfe1"/><rect x="993.60" y="415.49" width="10.56" height="3.81" fill="#7db26f"/><rect x="993.60" y="411.68" width="10.56" height="3.81" fill="#e9b43b"/><rect x="993.60" y="407.87" width="10.56" height="3.81" fill="#6dcfe1"/><rect x="993.60" y="404.06" width="10.56" height="3.81" fill="#ef8a3d"/><rect x="993.60" y="400.26" width="10.56" height="3.81" fill="#e34b3f"/><rect x="795.9" y="418.60" width="378.90" height="1.4" fill="#4a4a4a"/><text x="809.43" y="435.40" text-anchor="middle" font-size="11.7" fill="#3a3a3a">6 Oct 2025</text><text x="917.69" y="435.40" text-anchor="middle" font-size="11.7" fill="#3a3a3a">3 Nov 2025</text><text x="1025.95" y="435.40" text-anchor="middle" font-size="11.7" fill="#3a3a3a">1 Dec 2025</text><text x="1134.20" y="435.40" text-anchor="middle" font-size="11.7" fill="#3a3a3a">29 Dec 2025</text></svg>
<div class="abs" style="left:366px;top:482px;width:363px;height:240px;border:1px solid #e3e3e6;border-radius:3px;background:#fff"></div><svg class="abs" style="left:0;top:0" width="1244" height="860"><path d="M370 491V486H375 M720 486H725V491 M370 713V718H375 M720 718H725V713" fill="none" stroke="#6b6b6b" stroke-width="1.9" stroke-linecap="butt"/><path d="M543.5 487L547.5 483L551.5 487 M543.5 717L547.5 721L551.5 717 M371 598.0L367 602.0L371 606.0 M724 598.0L728 602.0L724 606.0" fill="none" stroke="#737373" stroke-width="1.8"/></svg><svg class="abs" style="left:383.00px;top:491.00px" width="24" height="24" viewBox="0 0 24 24"><path fill="#1c1c24" d="M11 18c0 1.1-.9 2-2 2s-2-.9-2-2 .9-2 2-2 2 .9 2 2zm-2-8c-1.1 0-2 .9-2 2s.9 2 2 2 2-.9 2-2-.9-2-2-2zm0-6c-1.1 0-2 .9-2 2s.9 2 2 2 2-.9 2-2-.9-2-2-2zm6 4c1.1 0 2-.9 2-2s-.9-2-2-2-2 .9-2 2 .9 2 2 2zm0 2c-1.1 0-2 .9-2 2s.9 2 2 2 2-.9 2-2-.9-2-2-2zm0 6c-1.1 0-2 .9-2 2s.9 2 2 2 2-.9 2-2-.9-2-2-2z"/></svg><div class="t" style="left:415.20px;top:491.81px;font-size:16.6px;line-height:21px;color:#222;font-weight:700;transform:scaleX(0.91);transform-origin:0 0;">Weekly fleet trip Speeding mi...</div><svg class="abs" style="left:646.65px;top:494.15px" width="24.7" height="24.7" viewBox="0 0 24 24"><path fill="#767676" d="M3 17.25V21h3.75L17.81 9.94l-3.75-3.75L3 17.25zM20.71 7.04c.39-.39.39-1.02 0-1.41l-2.34-2.34c-.39-.39-1.02-.39-1.41 0l-1.83 1.83 3.75 3.75 1.83-1.83z"/></svg><svg class="abs" style="left:684.45px;top:494.15px" width="24.7" height="24.7" viewBox="0 0 24 24"><path fill="#767676" d="M6 19c0 1.1.9 2 2 2h8c1.1 0 2-.9 2-2V7H6v12zM19 4h-3.5l-1-1h-5l-1 1H5v2h14V4z"/></svg><div class="abs" style="left:0;top:0;width:643.0px;height:860px;overflow:hidden"><div class="abs" style="left:388px;top:536px;width:25px;height:14px;background:#7db26f;border-radius:3px"></div><div class="t" style="left:418.30px;top:536.37px;font-size:11.6px;line-height:14px;color:#444;font-weight:400;">H-AB 1234</div><div class="abs" style="left:483.3px;top:536px;width:25px;height:14px;background:#e9b43b;border-radius:3px"></div><div class="t" style="left:513.60px;top:536.37px;font-size:11.6px;line-height:14px;color:#444;font-weight:400;">H-CD 5678</div><div class="abs" style="left:578.6px;top:536px;width:25px;height:14px;background:#6dcfe1;border-radius:3px"></div><div class="t" style="left:608.90px;top:536.37px;font-size:11.6px;line-height:14px;color:#444;font-weight:400;">H-EF 9012</div></div><svg class="abs" style="left:0;top:0" width="1244" height="860"><path fill="#dde1f2" d="M659.0 536.1L649.7 543.4L659.0 550.6999999999999Z"/><path fill="#5869b9" d="M697.7 536.1L707.0 543.4L697.7 550.6999999999999Z"/></svg><div class="t" style="left:669.70px;top:535.44px;font-size:12.6px;line-height:16px;color:#666;font-weight:400;">1/3</div><svg class="abs" style="left:0;top:0" width="1244" height="860"><text x="435" y="678.70" text-anchor="end" font-size="11.7" fill="#3a3a3a">0 km</text><rect x="443" y="659.12" width="258.80" height="1" fill="#dfe1ea"/><text x="435" y="663.02" text-anchor="end" font-size="11.7" fill="#3a3a3a">1,000 km</text><rect x="443" y="643.43" width="258.80" height="1" fill="#dfe1ea"/><text x="435" y="647.33" text-anchor="end" font-size="11.7" fill="#3a3a3a">2,000 km</text><rect x="443" y="627.75" width="258.80" height="1" fill="#dfe1ea"/><text x="435" y="631.65" text-anchor="end" font-size="11.7" fill="#3a3a3a">3,000 km</text><rect x="443" y="612.07" width="258.80" height="1" fill="#dfe1ea"/><text x="435" y="615.97" text-anchor="end" font-size="11.7" fill="#3a3a3a">4,000 km</text><rect x="443" y="596.38" width="258.80" height="1" fill="#dfe1ea"/><text x="435" y="600.28" text-anchor="end" font-size="11.7" fill="#3a3a3a">5,000 km</text><rect x="443" y="580.70" width="258.80" height="1" fill="#dfe1ea"/><text x="435" y="584.60" text-anchor="end" font-size="11.7" fill="#3a3a3a">6,000 km</text><rect x="448.45" y="644.09" width="7.58" height="31.21" fill="#7db26f"/><rect x="448.45" y="612.88" width="7.58" height="31.21" fill="#e9b43b"/><rect x="448.45" y="582.14" width="7.58" height="30.74" fill="#6dcfe1"/><rect x="466.94" y="644.09" width="7.58" height="31.21" fill="#7db26f"/><rect x="466.94" y="612.88" width="7.58" height="31.21" fill="#e9b43b"/><rect x="466.94" y="582.14" width="7.58" height="30.74" fill="#6dcfe1"/><rect x="485.42" y="644.09" width="7.58" height="31.21" fill="#7db26f"/><rect x="485.42" y="612.88" width="7.58" height="31.21" fill="#e9b43b"/><rect x="485.42" y="582.14" width="7.58" height="30.74" fill="#6dcfe1"/><rect x="503.91" y="644.09" width="7.58" height="31.21" fill="#7db26f"/><rect x="503.91" y="612.88" width="7.58" height="31.21" fill="#e9b43b"/><rect x="503.91" y="582.14" width="7.58" height="30.74" fill="#6dcfe1"/><rect x="522.40" y="644.09" width="7.58" height="31.21" fill="#7db26f"/><rect x="522.40" y="612.88" width="7.58" height="31.21" fill="#e9b43b"/><rect x="522.40" y="582.14" width="7.58" height="30.74" fill="#6dcfe1"/><rect x="540.88" y="644.09" width="7.58" height="31.21" fill="#7db26f"/><rect x="540.88" y="612.88" width="7.58" height="31.21" fill="#e9b43b"/><rect x="540.88" y="582.14" width="7.58" height="30.74" fill="#6dcfe1"/><rect x="559.37" y="644.09" width="7.58" height="31.21" fill="#7db26f"/><rect x="559.37" y="612.88" width="7.58" height="31.21" fill="#e9b43b"/><rect x="559.37" y="582.14" width="7.58" height="30.74" fill="#6dcfe1"/><rect x="577.85" y="671.38" width="7.58" height="3.92" fill="#7db26f"/><rect x="577.85" y="667.46" width="7.58" height="3.92" fill="#e9b43b"/><rect x="577.85" y="663.38" width="7.58" height="4.08" fill="#6dcfe1"/><rect x="443" y="674.60" width="258.80" height="1.4" fill="#4a4a4a"/><text x="452.24" y="691.40" text-anchor="middle" font-size="11.7" fill="#3a3a3a">6 Oct 2025</text><text x="544.67" y="691.40" text-anchor="middle" font-size="11.7" fill="#3a3a3a">10 Nov 2025</text><text x="637.10" y="691.40" text-anchor="middle" font-size="11.7" fill="#3a3a3a">15 Dec 2025</text></svg>
<div class="abs" style="left:745px;top:482px;width:457px;height:240px;border:1px solid #e3e3e6;border-radius:3px;background:#fff"></div><svg class="abs" style="left:0;top:0" width="1244" height="860"><path d="M749 491V486H754 M1193 486H1198V491 M749 713V718H754 M1193 718H1198V713" fill="none" stroke="#6b6b6b" stroke-width="1.9" stroke-linecap="butt"/><path d="M969.5 487L973.5 483L977.5 487 M969.5 717L973.5 721L977.5 717 M750 598.0L746 602.0L750 606.0 M1197 598.0L1201 602.0L1197 606.0" fill="none" stroke="#737373" stroke-width="1.8"/></svg><svg class="abs" style="left:762.00px;top:491.00px" width="24" height="24" viewBox="0 0 24 24"><path fill="#1c1c24" d="M11 18c0 1.1-.9 2-2 2s-2-.9-2-2 .9-2 2-2 2 .9 2 2zm-2-8c-1.1 0-2 .9-2 2s.9 2 2 2 2-.9 2-2-.9-2-2-2zm0-6c-1.1 0-2 .9-2 2s.9 2 2 2 2-.9 2-2-.9-2-2-2zm6 4c1.1 0 2-.9 2-2s-.9-2-2-2-2 .9-2 2 .9 2 2 2zm0 2c-1.1 0-2 .9-2 2s.9 2 2 2 2-.9 2-2-.9-2-2-2zm0 6c-1.1 0-2 .9-2 2s.9 2 2 2 2-.9 2-2-.9-2-2-2z"/></svg><div class="t" style="left:794.20px;top:491.81px;font-size:16.6px;line-height:21px;color:#222;font-weight:700;transform:scaleX(0.91);transform-origin:0 0;">Weekly fleet trip Count</div><svg class="abs" style="left:1119.65px;top:494.15px" width="24.7" height="24.7" viewBox="0 0 24 24"><path fill="#767676" d="M3 17.25V21h3.75L17.81 9.94l-3.75-3.75L3 17.25zM20.71 7.04c.39-.39.39-1.02 0-1.41l-2.34-2.34c-.39-.39-1.02-.39-1.41 0l-1.83 1.83 3.75 3.75 1.83-1.83z"/></svg><svg class="abs" style="left:1157.45px;top:494.15px" width="24.7" height="24.7" viewBox="0 0 24 24"><path fill="#767676" d="M6 19c0 1.1.9 2 2 2h8c1.1 0 2-.9 2-2V7H6v12zM19 4h-3.5l-1-1h-5l-1 1H5v2h14V4z"/></svg><div class="abs" style="left:0;top:0;width:1116.0px;height:860px;overflow:hidden"><div class="abs" style="left:767px;top:536px;width:25px;height:14px;background:#7db26f;border-radius:3px"></div><div class="t" style="left:797.30px;top:536.37px;font-size:11.6px;line-height:14px;color:#444;font-weight:400;">H-AB 1234</div><div class="abs" style="left:862.3px;top:536px;width:25px;height:14px;background:#e9b43b;border-radius:3px"></div><div class="t" style="left:892.60px;top:536.37px;font-size:11.6px;line-height:14px;color:#444;font-weight:400;">H-CD 5678</div><div class="abs" style="left:957.6px;top:536px;width:25px;height:14px;background:#6dcfe1;border-radius:3px"></div><div class="t" style="left:987.90px;top:536.37px;font-size:11.6px;line-height:14px;color:#444;font-weight:400;">H-EF 9012</div><div class="abs" style="left:1051.4px;top:536px;width:25px;height:14px;background:#ef8a3d;border-radius:3px"></div><div class="t" style="left:1081.70px;top:536.37px;font-size:11.6px;line-height:14px;color:#444;font-weight:400;">MDT-1234</div></div><svg class="abs" style="left:0;top:0" width="1244" height="860"><path fill="#dde1f2" d="M1132.0 536.1L1122.7 543.4L1132.0 550.6999999999999Z"/><path fill="#5869b9" d="M1170.7 536.1L1180.0 543.4L1170.7 550.6999999999999Z"/></svg><div class="t" style="left:1142.70px;top:535.44px;font-size:12.6px;line-height:16px;color:#666;font-weight:400;">1/2</div><svg class="abs" style="left:0;top:0" width="1244" height="860"><text x="785.2" y="678.70" text-anchor="end" font-size="11.7" fill="#3a3a3a">0</text><rect x="793.2" y="659.12" width="381.60" height="1" fill="#dfe1ea"/><text x="785.2" y="663.02" text-anchor="end" font-size="11.7" fill="#3a3a3a">50</text><rect x="793.2" y="643.43" width="381.60" height="1" fill="#dfe1ea"/><text x="785.2" y="647.33" text-anchor="end" font-size="11.7" fill="#3a3a3a">100</text><rect x="793.2" y="627.75" width="381.60" height="1" fill="#dfe1ea"/><text x="785.2" y="631.65" text-anchor="end" font-size="11.7" fill="#3a3a3a">150</text><rect x="793.2" y="612.07" width="381.60" height="1" fill="#dfe1ea"/><text x="785.2" y="615.97" text-anchor="end" font-size="11.7" fill="#3a3a3a">200</text><rect x="793.2" y="596.38" width="381.60" height="1" fill="#dfe1ea"/><text x="785.2" y="600.28" text-anchor="end" font-size="11.7" fill="#3a3a3a">250</text><rect x="793.2" y="580.70" width="381.60" height="1" fill="#dfe1ea"/><text x="785.2" y="584.60" text-anchor="end" font-size="11.7" fill="#3a3a3a">300</text><rect x="801.51" y="646.13" width="10.63" height="29.17" fill="#7db26f"/><rect x="801.51" y="616.33" width="10.63" height="29.80" fill="#e9b43b"/><rect x="801.51" y="586.53" width="10.63" height="29.80" fill="#6dcfe1"/><rect x="828.77" y="646.13" width="10.63" height="29.17" fill="#7db26f"/><rect x="828.77" y="616.33" width="10.63" height="29.80" fill="#e9b43b"/><rect x="828.77" y="586.53" width="10.63" height="29.80" fill="#6dcfe1"/><rect x="856.03" y="646.13" width="10.63" height="29.17" fill="#7db26f"/><rect x="856.03" y="616.33" width="10.63" height="29.80" fill="#e9b43b"/><rect x="856.03" y="586.53" width="10.63" height="29.80" fill="#6dcfe1"/><rect x="883.28" y="646.13" width="10.63" height="29.17" fill="#7db26f"/><rect x="883.28" y="616.33" width="10.63" height="29.80" fill="#e9b43b"/><rect x="883.28" y="586.53" width="10.63" height="29.80" fill="#6dcfe1"/><rect x="910.54" y="646.13" width="10.63" height="29.17" fill="#7db26f"/><rect x="910.54" y="616.33" width="10.63" height="29.80" fill="#e9b43b"/><rect x="910.54" y="586.53" width="10.63" height="29.80" fill="#6dcfe1"/><rect x="937.80" y="646.13" width="10.63" height="29.17" fill="#7db26f"/><rect x="937.80" y="616.33" width="10.63" height="29.80" fill="#e9b43b"/><rect x="937.80" y="586.53" width="10.63" height="29.80" fill="#6dcfe1"/><rect x="965.06" y="646.13" width="10.63" height="29.17" fill="#7db26f"/><rect x="965.06" y="616.33" width="10.63" height="29.80" fill="#e9b43b"/><rect x="965.06" y="586.53" width="10.63" height="29.80" fill="#6dcfe1"/><rect x="992.31" y="670.59" width="10.63" height="4.70" fill="#7db26f"/><rect x="992.31" y="666.20" width="10.63" height="4.39" fill="#e9b43b"/><rect x="992.31" y="661.81" width="10.63" height="4.39" fill="#6dcfe1"/><rect x="793.2" y="674.60" width="381.60" height="1.4" fill="#4a4a4a"/><text x="806.83" y="691.40" text-anchor="middle" font-size="11.7" fill="#3a3a3a">6 Oct 2025</text><text x="915.86" y="691.40" text-anchor="middle" font-size="11.7" fill="#3a3a3a">3 Nov 2025</text><text x="1024.89" y="691.40" text-anchor="middle" font-size="11.7" fill="#3a3a3a">1 Dec 2025</text><text x="1133.91" y="691.40" text-anchor="middle" font-size="11.7" fill="#3a3a3a">29 Dec 2025</text></svg>
<svg class="abs" style="left:0;top:0" width="1244" height="860"><rect x="82" y="738" width="1120" height="48" fill="#f6f7fc"/><rect x="82.00" y="738" width="78.667" height="48" fill="#eceef8"/><rect x="176.67" y="738" width="78.667" height="48" fill="#eceef8"/><rect x="271.33" y="738" width="78.667" height="48" fill="#eceef8"/><rect x="366.00" y="738" width="78.667" height="48" fill="#eceef8"/><rect x="460.67" y="738" width="78.667" height="48" fill="#eceef8"/><rect x="555.34" y="738" width="78.667" height="48" fill="#eceef8"/><rect x="650.00" y="738" width="78.667" height="48" fill="#eceef8"/><rect x="744.67" y="738" width="78.667" height="48" fill="#eceef8"/><rect x="839.34" y="738" width="78.667" height="48" fill="#eceef8"/><rect x="934.00" y="738" width="78.667" height="48" fill="#eceef8"/><rect x="1028.67" y="738" width="78.667" height="48" fill="#eceef8"/><rect x="1123.34" y="738" width="78.667" height="48" fill="#eceef8"/><rect x="82.5" y="738.5" width="1119" height="47" fill="none" stroke="#8f98da" stroke-width="1" stroke-dasharray="3 2"/></svg>
<div class="abs" style="left:586px;top:745px;width:112px;height:34px;background:#3f51b5;border-radius:4px"></div>
<div class="t" style="left:442.00px;width:400px;text-align:center;top:751.38px;font-size:16.4px;line-height:20px;color:#fff;font-weight:700;transform:scaleX(0.9);transform-origin:50% 0;">Add widget</div>
<div class="abs" style="left:349px;top:792px;width:546px;height:58px;background:#262626;border-radius:5px"></div>
<div class="abs" style="left:361px;top:804px;width:191px;height:34px;border:1px solid #7f95e6;border-radius:4px;overflow:hidden"><div class="abs" style="left:0;top:0;width:100px;height:32px;background:#3b4153;border-right:1px solid #7f95e6"></div></div>
<div class="t" style="left:211.00px;width:400px;text-align:center;top:810.58px;font-size:16.4px;line-height:20px;color:#dfe5f7;font-weight:700;transform:scaleX(0.9);transform-origin:50% 0;">Edit page</div>
<div class="t" style="left:306.00px;width:400px;text-align:center;top:810.58px;font-size:16.4px;line-height:20px;color:#8ea6f5;font-weight:700;transform:scaleX(0.9);transform-origin:50% 0;">Preview</div>
<div class="abs" style="left:568px;top:804px;width:96px;height:34px;border:1px solid #4d5683;border-radius:4px"></div>
<svg class="abs" style="left:579.00px;top:810.50px" width="21" height="21" viewBox="0 0 24 24"><path fill="#8ea6f5" d="M3 10h11v2H3zm0-2h11V6H3zm0 8h7v-2H3zm15.01-3.13.71-.71c.39-.39 1.02-.39 1.41 0l.71.71c.39.39.39 1.02 0 1.41l-.71.71-2.12-2.12zm-.71.71-5.3 5.3V21h2.12l5.3-5.3-2.12-2.12z"/></svg>
<div class="t" style="left:427.00px;width:400px;text-align:center;top:810.58px;font-size:16.4px;line-height:20px;color:#8ea6f5;font-weight:700;transform:scaleX(0.9);transform-origin:50% 0;">Menu</div>
<div class="abs" style="left:680px;top:804px;width:91px;height:34px;background:#3f51b5;border-radius:4px"></div>
<svg class="abs" style="left:692.00px;top:811.00px" width="20" height="20" viewBox="0 0 24 24"><path fill="#fff" d="M17 3H5c-1.11 0-2 .9-2 2v14c0 1.1.89 2 2 2h14c1.1 0 2-.9 2-2V7l-4-4zm-5 16c-1.66 0-3-1.34-3-3s1.34-3 3-3 3 1.34 3 3-1.34 3-3 3zm3-10H5V5h10v4z"/></svg>
<div class="t" style="left:537.40px;width:400px;text-align:center;top:810.58px;font-size:16.4px;line-height:20px;color:#fff;font-weight:700;transform:scaleX(0.9);transform-origin:50% 0;">Save</div>
<div class="abs" style="left:787px;top:804px;width:96px;height:34px;border:1px solid #7a3a3a;border-radius:4px"></div>
<svg class="abs" style="left:797.70px;top:810.00px" width="22" height="22" viewBox="0 0 24 24"><path fill="#e5625e" d="M19 6.41 17.59 5 12 10.59 6.41 5 5 6.41 10.59 12 5 17.59 6.41 19 12 13.41 17.59 19 19 17.59 13.41 12z"/></svg>
<div class="t" style="left:646.80px;width:400px;text-align:center;top:810.58px;font-size:16.4px;line-height:20px;color:#e5625e;font-weight:700;transform:scaleX(0.9);transform-origin:50% 0;">Close</div>
<div class="abs" style="left:1226px;top:630px;width:8px;height:219px;background:#a9aaad;border-radius:4px"></div>
<div class="abs" style="left:1202px;top:430px;width:40px;height:80px;background:#0d7ef3"></div>
<div class="t" style="left:1183.7px;top:462px;width:80px;height:16px;line-height:16px;text-align:center;font-size:13.8px;color:#fff;transform:rotate(-90deg)">Feedback</div>
</body></html>
